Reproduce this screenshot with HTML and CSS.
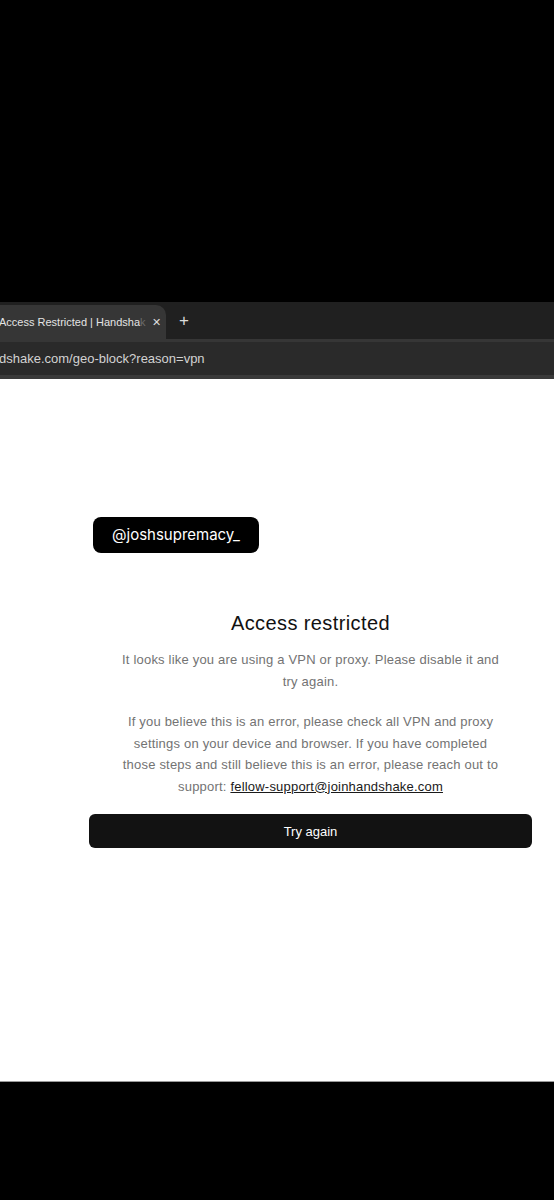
FILE: index.html
```html
<!DOCTYPE html>
<html lang="en">
<head>
    <meta charset="UTF-8">
    <meta name="viewport" content="width=device-width, initial-scale=1.0">
    <title>Access Restricted | Handshake</title>
    <link rel="stylesheet" href="styles.css">
</head>
<body>
    <div class="top-black"></div>

    <!-- Thanh tab + thanh địa chỉ -->
    <div class="chrome">
        <div class="tab-bar">
            <div class="tab">
                <span class="tab-title">Access Restricted | Handsha<span class="fade">k</span></span>
                <span class="tab-close">&#x2715;</span>
            </div>
            <span class="tab-new">+</span>
        </div>
        <div class="url-bar">
            <span class="url">dshake.com/geo-block?reason=vpn</span>
        </div>
    </div>

    <div class="page">
        <div class="handle">@joshsupremacy_</div>

        <div class="content">
            <h1>Access restricted</h1>
            <p>It looks like you are using a VPN or proxy. Please disable it and try again.</p>
            <p class="last">If you believe this is an error, please check all VPN and proxy settings on your device and browser. If you have completed those steps and still believe this is an error, please reach out to support: <a href="mailto:fellow-support@joinhandshake.com">fellow-support@joinhandshake.com</a></p>
            <button class="retry">Try again</button>
        </div>
    </div>

    <div class="bottom-black"></div>
</body>
</html>
```

FILE: styles.css
```css
body {
    margin: 0;
    padding: 0;
    background-color: #000;
    font-family: "Liberation Sans", Arial, sans-serif;
}

.top-black {
    height: 302px;
}

.chrome {
    background-color: #202020;
}

.tab-bar {
    height: 37px;
    display: flex;
    align-items: flex-end;
    border-bottom: 3px solid #363636;
}

.tab {
    width: 166px;
    height: 34px;
    background-color: #363636;
    border-top-right-radius: 10px;
    display: flex;
    align-items: center;
    color: #e4e4e4;
    font-size: 11px;
}

.tab-title {
    flex: 1;
    white-space: nowrap;
    margin-left: -1px;
}

.tab-title .fade {
    color: #6a6a6a;
}

.tab-close {
    width: 24px;
    text-align: center;
    font-size: 11px;
    color: #ddd;
    margin-left: 2px;
}

.tab-new {
    color: #ddd;
    font-size: 17px;
    margin-left: 13px;
    height: 34px;
    line-height: 32px;
}

.url-bar {
    height: 33px;
    display: flex;
    align-items: center;
    background-color: #2a2a2a;
    border-bottom: 4px solid #3a3a3a;
}

.url {
    color: #d2d2d2;
    font-size: 13px;
    margin-left: -1px;
}

.page {
    position: relative;
    background-color: #fff;
    height: 702px;
    border-bottom: 1px solid #9a9a9a;
}

.handle {
    position: absolute;
    top: 138px;
    left: 93px;
    width: 166px;
    height: 36px;
    line-height: 36px;
    background-color: #000;
    color: #fff;
    border-radius: 8px;
    text-align: center;
    font-size: 15px;
    font-family: "Inter", "Liberation Sans", sans-serif;
}

.content {
    width: 443px;
    margin-left: 89px;
    padding-top: 233px;
    text-align: center;
}

h1 {
    margin: 0 0 14px;
    font-size: 20px;
    font-weight: normal;
    color: #111;
    letter-spacing: 0.4px;
}

p {
    width: 386px;
    margin: 0 auto 19px;
    font-size: 13px;
    line-height: 21.5px;
    letter-spacing: 0.2px;
    color: #737373;
}

p.last {
    margin-bottom: 17px;
}

a {
    color: #1a1a1a;
    text-decoration: underline;
}

.retry {
    width: 100%;
    height: 34px;
    margin-top: 0;
    border: none;
    border-radius: 6px;
    background-color: #121212;
    color: #fff;
    font-size: 13px;
    font-family: "Liberation Sans", Arial, sans-serif;
}

.bottom-black {
    height: 119px;
}
```
